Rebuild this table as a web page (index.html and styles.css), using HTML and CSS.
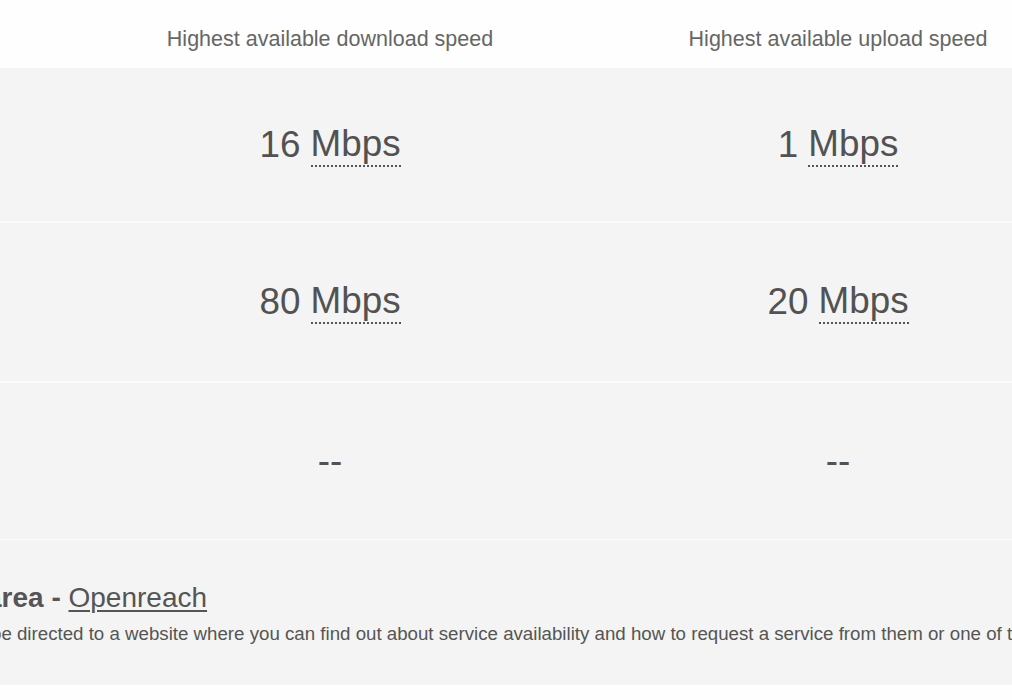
FILE: index.html
```html
<!DOCTYPE html>
<html lang="en">
<head>
<meta charset="utf-8">
<title>Broadband speeds</title>
<link rel="stylesheet" href="styles.css">
</head>
<body>
<div class="results">
  <div class="speed-table">
    <div class="row head">
      <div class="cell label"></div>
      <div class="cell">Highest available download speed</div>
      <div class="cell">Highest available upload speed</div>
    </div>
    <div class="row r1">
      <div class="cell label"></div>
      <div class="cell value">16 <abbr class="unit" title="Megabits per second">Mbps</abbr></div>
      <div class="cell value">1 <abbr class="unit" title="Megabits per second">Mbps</abbr></div>
    </div>
    <div class="row r2">
      <div class="cell label"></div>
      <div class="cell value">80 <abbr class="unit" title="Megabits per second">Mbps</abbr></div>
      <div class="cell value">20 <abbr class="unit" title="Megabits per second">Mbps</abbr></div>
    </div>
    <div class="row r3">
      <div class="cell label"></div>
      <div class="cell value">--</div>
      <div class="cell value">--</div>
    </div>
  </div>
  <div class="operators">
    <h2 class="op-title">area - <a class="op-link" href="#">Openreach</a></h2>
    <p class="op-note">be directed to a website where you can find out about service availability and how to request a service from them or one of their providers.</p>
  </div>
</div>
</body>
</html>
```

FILE: styles.css
```css
html, body {
  margin: 0;
  padding: 0;
  background: #fefefe;
  overflow: hidden;
}

body {
  font-family: "Liberation Sans", Arial, sans-serif;
  color: #555;
  width: 1012px;
  height: 700px;
}

.results {
  width: 1092px;
}

.speed-table {
  display: flex;
  flex-direction: column;
  gap: 0;
}

.row {
  display: grid;
  grid-template-columns: 76px 508px 508px;
  background: #f4f4f4;
}

.row.head {
  background: #fefefe;
  height: 68px;
  box-sizing: border-box;
  padding-top: 27px;
  font-size: 21.5px;
  line-height: 24px;
  color: #666;
}

.row.head .cell {
  text-align: center;
}

.r1 { height: 153px; border-bottom: 2px solid #fafafa; }
.r2 { height: 158px; border-bottom: 2px solid #fbfbfb; }
.r3 { height: 156px; border-bottom: 1px solid #fdfdfd; }

.value {
  display: flex;
  align-items: center;
  justify-content: center;
  font-size: 36.8px;
  color: #525252;
  white-space: pre;
}

.unit {
  text-decoration: none;
  border-bottom: 2px dotted #555;
  cursor: help;
}

.operators {
  background: #f4f4f4;
  height: 145px;
  box-sizing: border-box;
  padding-top: 42px;
}

.op-title {
  margin: 0 0 9px -14px;
  font-size: 28px;
  line-height: 32px;
  font-weight: bold;
  color: #555;
  white-space: nowrap;
}

.op-link {
  font-weight: normal;
  color: #555;
  text-decoration: underline;
  text-decoration-thickness: 2px;
  text-underline-offset: 3px;
}

.op-note {
  margin: 0 0 0 -9px;
  font-size: 18.7px;
  line-height: 22px;
  color: #555;
  white-space: nowrap;
}
```
